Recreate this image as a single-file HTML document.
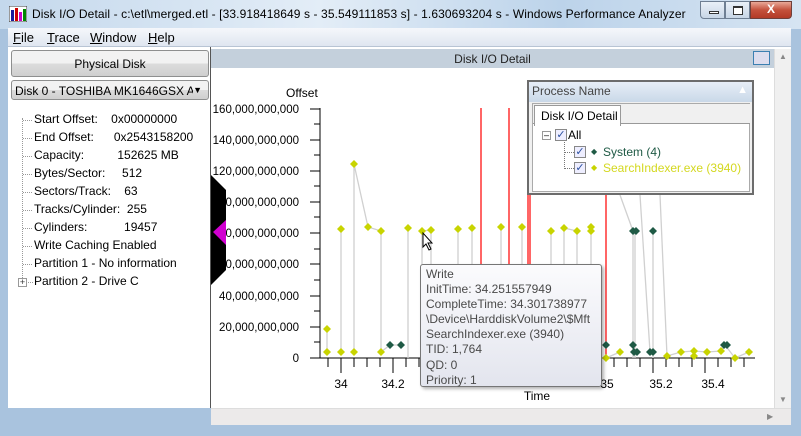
<!DOCTYPE html>
<html><head><meta charset="utf-8"><style>
*{margin:0;padding:0;box-sizing:border-box}
body{width:801px;height:436px;overflow:hidden;font-family:"Liberation Sans",sans-serif;font-size:12px;color:#000;background:#a9c3de;position:relative}
.abs{position:absolute}
#title{left:0;top:0;width:801px;height:29px;background:linear-gradient(90deg,#c4d8ec,#e3edf7 40%,#bcd3ea 70%,#d6e4f2);}
#title .t{left:32px;top:7px;font-size:12px;color:#000;white-space:nowrap;letter-spacing:0.1px}
#menu{left:8px;top:28px;width:783px;height:19px;background:linear-gradient(#f5f7fb,#dfe6f0);border-bottom:1px solid #b8c4d4}
#menu span{position:absolute;top:2px;font-size:13px}
#left{left:8px;top:47px;width:203px;height:361px;background:#fff;border-right:1px solid #555}
.btn{position:absolute;border:1px solid #8e8f8f;border-radius:3px;background:linear-gradient(#f2f2f2 50%,#dcdcdc 50%,#cfcfcf)}
.tree div{position:absolute;left:26px;font-size:12px;white-space:nowrap}
.tree i{position:absolute;left:15px;width:9px;border-top:1px dotted #999}
#main{left:211px;top:47px;width:580px;height:361px;background:#fff}
#hdr{left:211px;top:49px;width:563px;height:19px;background:#c4d0dc;text-align:center;font-size:12px;padding-top:3px;color:#222}
#vs{left:774px;top:49px;width:17px;height:359px;background:#f0f0f0;border-left:1px solid #ddd}
#hs{left:211px;top:408px;width:580px;height:17px;background:#eceaea;border-top:1px solid #ddd}
#tip{left:420px;top:264px;width:182px;height:123px;border:1px solid #767676;border-radius:3px;background:linear-gradient(#fbfbfd,#e3e5ee);box-shadow:2px 2px 3px rgba(0,0,0,.3);padding:2px 5px;color:#4a4a4a;font-size:12px;line-height:15.1px}
#pn{left:527px;top:80px;width:227px;height:115px;border:2px solid #6c6c6c;background:#f0f0f0}
</style></head><body>
<div id="title" class="abs">
 <svg class="abs" style="left:9px;top:6px" width="18" height="16"><rect x="0" y="0" width="18" height="16" fill="#fff" stroke="#333"/><rect x="2" y="4" width="3" height="11" fill="#1a1a9a"/><rect x="6" y="2" width="3" height="13" fill="#c00"/><rect x="10" y="6" width="3" height="9" fill="#c0c"/><rect x="14" y="3" width="3" height="12" fill="#080"/></svg>
 <div class="abs t">Disk I/O Detail - c:\etl\merged.etl - [33.918418649 s - 35.549111853 s] - 1.630693204 s - Windows Performance Analyzer</div>
 <div class="abs" style="left:700px;top:1px;width:25px;height:18px;border:1px solid #6f7f93;border-radius:0 0 0 4px;background:linear-gradient(#e9f0f8,#c8d6e6)"><div class="abs" style="left:8px;top:9px;width:10px;height:3px;border:1px solid #333;background:#fff"></div></div>
 <div class="abs" style="left:725px;top:1px;width:25px;height:18px;border:1px solid #6f7f93;background:linear-gradient(#e9f0f8,#c8d6e6)"><div class="abs" style="left:7px;top:4px;width:10px;height:9px;border:1px solid #333;border-top-width:2px;background:#fff"></div></div>
 <div class="abs" style="left:750px;top:1px;width:42px;height:18px;border:1px solid #6f3f3a;border-radius:0 0 4px 0;background:linear-gradient(#e9a898,#c4513c 50%,#b33a26);color:#fff;font-weight:bold;text-align:center;font-size:12px;line-height:15px">X</div>
</div>
<div id="menu" class="abs"><span style="left:5px"><u>F</u>ile</span><span style="left:39px"><u>T</u>race</span><span style="left:82px"><u>W</u>indow</span><span style="left:140px"><u>H</u>elp</span></div>
<div id="left" class="abs">
 <div class="btn" style="left:3px;top:3px;width:198px;height:27px;text-align:center;padding-top:6px">Physical Disk</div>
 <div class="btn" style="left:3px;top:33px;width:198px;height:20px;"><span class="abs" style="left:3px;top:3px;width:178px;overflow:hidden;white-space:nowrap">Disk 0 - TOSHIBA MK1646GSX ATA</span><span class="abs" style="right:6px;top:4px;font-size:9px">▼</span></div>
 <div class="tree abs" style="left:0;top:63px;width:200px;height:240px">
  <div style="top:2px">Start Offset:&nbsp;&nbsp;&nbsp; 0x00000000</div><i style="top:10px"></i>
  <div style="top:20px">End Offset:&nbsp;&nbsp;&nbsp;&nbsp;&nbsp; 0x2543158200</div><i style="top:28px"></i>
  <div style="top:38px">Capacity:&nbsp;&nbsp;&nbsp;&nbsp;&nbsp;&nbsp;&nbsp;&nbsp;&nbsp; 152625 MB</div><i style="top:46px"></i>
  <div style="top:56px">Bytes/Sector:&nbsp;&nbsp;&nbsp;&nbsp; 512</div><i style="top:64px"></i>
  <div style="top:74px">Sectors/Track:&nbsp;&nbsp;&nbsp; 63</div><i style="top:82px"></i>
  <div style="top:92px">Tracks/Cylinder:&nbsp; 255</div><i style="top:100px"></i>
  <div style="top:110px">Cylinders:&nbsp;&nbsp;&nbsp;&nbsp;&nbsp;&nbsp;&nbsp;&nbsp;&nbsp;&nbsp; 19457</div><i style="top:118px"></i>
  <div style="top:128px">Write Caching Enabled</div><i style="top:136px"></i>
  <div style="top:146px">Partition 1 - No information</div><i style="top:154px"></i>
  <div style="top:164px">Partition 2 - Drive C</div><i style="top:172px;left:20px;width:5px"></i>
  <span class="abs" style="left:10px;top:168px;width:9px;height:9px;border:1px solid #999;font-size:9px;line-height:7px;text-align:center;color:#333">+</span>
  <span class="abs" style="left:14px;top:8px;height:160px;border-left:1px dotted #999"></span>
 </div>
</div>
<div id="main" class="abs"></div>
<div id="hdr" class="abs">Disk I/O Detail<div class="abs" style="right:4px;top:2px;width:17px;height:14px;border:1px solid #3c7fb1;background:#dde;"></div></div>
<div id="vs" class="abs"><span class="abs" style="left:4px;top:3px;font-size:8px;color:#888">▲</span><span class="abs" style="left:4px;bottom:4px;font-size:8px;color:#888">▼</span></div>
<div id="hs" class="abs"><span class="abs" style="left:556px;top:3px;font-size:8px;color:#888">▶</span></div>
<svg class="abs" style="left:0;top:0" width="801" height="436">
 <g font-size="11.5" fill="#000" text-anchor="end" font-family="Liberation Sans">
  <text x="299" y="113">160,000,000,000</text><text x="299" y="144">140,000,000,000</text><text x="299" y="175">120,000,000,000</text><text x="299" y="206">100,000,000,000</text><text x="299" y="237">80,000,000,000</text><text x="299" y="268">60,000,000,000</text><text x="299" y="300">40,000,000,000</text><text x="299" y="331">20,000,000,000</text><text x="299" y="362">0</text>
 </g>
 <polygon points="211,175 226,190 226,270 211,285" fill="#000"/>
 <polygon points="226,220 226,245 213,232" fill="#d000d0"/>
 <text x="286" y="97" font-size="12">Offset</text>
 <g stroke="#000"><line x1="320" y1="108" x2="320" y2="358"/><line x1="320" y1="358" x2="755" y2="358"/>
  <path d="M310 109H320M310 140H320M310 171H320M310 202H320M310 233H320M310 264H320M310 296H320M310 327H320M310 358H320M314 124H320M314 155H320M314 186H320M314 217H320M314 249H320M314 280H320M314 311H320M314 342H320"/>
  <path d="M341 358V373M393 358V373M445 358V373M497 358V373M549 358V373M601 358V373M653 358V373M705 358V373M328 358V367M354 358V367M367 358V367M380 358V367M406 358V367M419 358V367M432 358V367M458 358V367M471 358V367M484 358V367M510 358V367M523 358V367M536 358V367M562 358V367M575 358V367M588 358V367M614 358V367M627 358V367M640 358V367M666 358V367M679 358V367M692 358V367M718 358V367M731 358V367M744 358V367"/></g>
 <g font-size="12" text-anchor="middle"><text x="341" y="388">34</text><text x="393" y="388">34.2</text><text x="607" y="388">35</text><text x="661" y="388">35.2</text><text x="713" y="388">35.4</text><text x="537" y="400">Time</text></g>
 <g stroke="#ff0000" stroke-width="1.2"><line x1="481" y1="108" x2="481" y2="358"/><line x1="509" y1="108" x2="509" y2="358"/><line x1="528" y1="195" x2="528" y2="358"/><line x1="530" y1="195" x2="530" y2="358"/><line x1="606" y1="195" x2="606" y2="358"/></g>
 <g stroke="#d0d0d0" stroke-width="1.3" fill="none">
  <path d="M327 329V352M341 229V352M354 164V352M354 164L368 227L381 231M381 231V352M408 228V358M422 231V358M422 231L431 230V358M458 229V358M472 228V358M501 227V358M522 227V358M551 231V358M564 228V358M564 228L577 231V358M591 227V358M633 231V358M635 231V358M653 231V358M620 195L633 231M640 195L650 352M653 231V352M660 195L667 356L681 352L694 351L707 352L721 351L725 345L735 358L749 352M390 345L401 345M381 352L390 345M606 358L620 352"/>
 </g>
 <g fill="#c8d400">
  <path d="M327 325l4 4-4 4-4-4zM341 225l4 4-4 4-4-4zM354 160l4 4-4 4-4-4zM368 223l4 4-4 4-4-4zM381 227l4 4-4 4-4-4zM408 224l4 4-4 4-4-4zM422 227l4 4-4 4-4-4zM431 226l4 4-4 4-4-4zM458 225l4 4-4 4-4-4zM472 224l4 4-4 4-4-4zM501 223l4 4-4 4-4-4zM522 223l4 4-4 4-4-4zM551 227l4 4-4 4-4-4zM564 224l4 4-4 4-4-4zM577 227l4 4-4 4-4-4zM591 223l4 4-4 4-4-4zM591 227l4 4-4 4-4-4zM327 348l4 4-4 4-4-4zM341 348l4 4-4 4-4-4zM354 348l4 4-4 4-4-4zM381 348l4 4-4 4-4-4zM606 354l4 4-4 4-4-4zM620 348l4 4-4 4-4-4zM667 352l4 4-4 4-4-4zM681 348l4 4-4 4-4-4zM694 347l4 4-4 4-4-4zM694 352l4 4-4 4-4-4zM707 348l4 4-4 4-4-4zM721 347l4 4-4 4-4-4zM735 354l4 4-4 4-4-4zM749 348l4 4-4 4-4-4z"/>
 </g>
 <g fill="#1f5a45">
  <path d="M390 341l4 4-4 4-4-4zM401 341l4 4-4 4-4-4zM633 227l4 4-4 4-4-4zM636 227l4 4-4 4-4-4zM653 227l4 4-4 4-4-4zM606 341l4 4-4 4-4-4zM633 341l4 4-4 4-4-4zM634 348l4 4-4 4-4-4zM637 348l4 4-4 4-4-4zM650 348l4 4-4 4-4-4zM653 348l4 4-4 4-4-4zM724 341l4 4-4 4-4-4zM727 341l4 4-4 4-4-4z"/>
 </g>
 <path d="M423 233v14l3-3 3 6 2-1-3-6h4z" fill="#fff" stroke="#000" stroke-width="1"/>
</svg>
<div id="tip" class="abs">Write<br>InitTime: 34.251557949<br>CompleteTime: 34.301738977<br>\Device\HarddiskVolume2\$Mft<br>SearchIndexer.exe (3940)<br>TID: 1,764<br>QD: 0<br>Priority: 1</div>
<div id="pn" class="abs">
 <div class="abs" style="left:0;top:0;width:223px;height:20px;background:linear-gradient(#e7eef7,#c9d8e8);padding:2px 3px;color:#444;font-size:12px">Process Name<span class="abs" style="right:4px;top:2px;color:#fff;font-size:11px">▲</span></div>
 <div class="abs" style="left:3px;top:21px;width:218px;height:89px;background:#fff;border:1px solid #aaa">
  <div class="abs" style="left:0;top:0;width:217px;height:20px;background:#f0f0f0;border-bottom:1px solid #999"></div>
  <div class="abs" style="left:1px;top:1px;width:87px;height:21px;background:#fff;border:1px solid #999;border-bottom:none;padding:3px 0 0 6px">Disk I/O Detail</div>
  <div class="abs" style="left:9px;top:27px;width:9px;height:9px;border:1px solid #999;font-size:9px;line-height:6px;text-align:center">–</div>
  <div class="abs" style="left:22px;top:25px;width:12px;height:12px;border:1px solid #888;background:#eef;color:#2a4fa0;font-size:11px;line-height:10px;text-align:center">✓</div>
  <div class="abs" style="left:35px;top:24px;color:#000">All</div>
  <div class="abs" style="left:31px;top:38px;height:27px;border-left:1px dotted #777"></div>
  <div class="abs" style="left:31px;top:48px;width:10px;border-top:1px dotted #777"></div>
  <div class="abs" style="left:31px;top:64px;width:10px;border-top:1px dotted #777"></div>
  <div class="abs" style="left:41px;top:42px;width:12px;height:12px;border:1px solid #888;background:#eef;color:#2a4fa0;font-size:11px;line-height:10px;text-align:center">✓</div>
  <div class="abs" style="left:41px;top:58px;width:12px;height:12px;border:1px solid #888;background:#eef;color:#2a4fa0;font-size:11px;line-height:10px;text-align:center">✓</div>
  <div class="abs" style="left:58px;top:43px;font-size:8px;color:#1f5a45">◆</div>
  <div class="abs" style="left:58px;top:59px;font-size:8px;color:#c8d400">◆</div>
  <div class="abs" style="left:70px;top:41px;color:#1f5a45">System (4)</div>
  <div class="abs" style="left:70px;top:57px;color:#d4d820">SearchIndexer.exe (3940)</div>
 </div>
</div>
</body></html>
